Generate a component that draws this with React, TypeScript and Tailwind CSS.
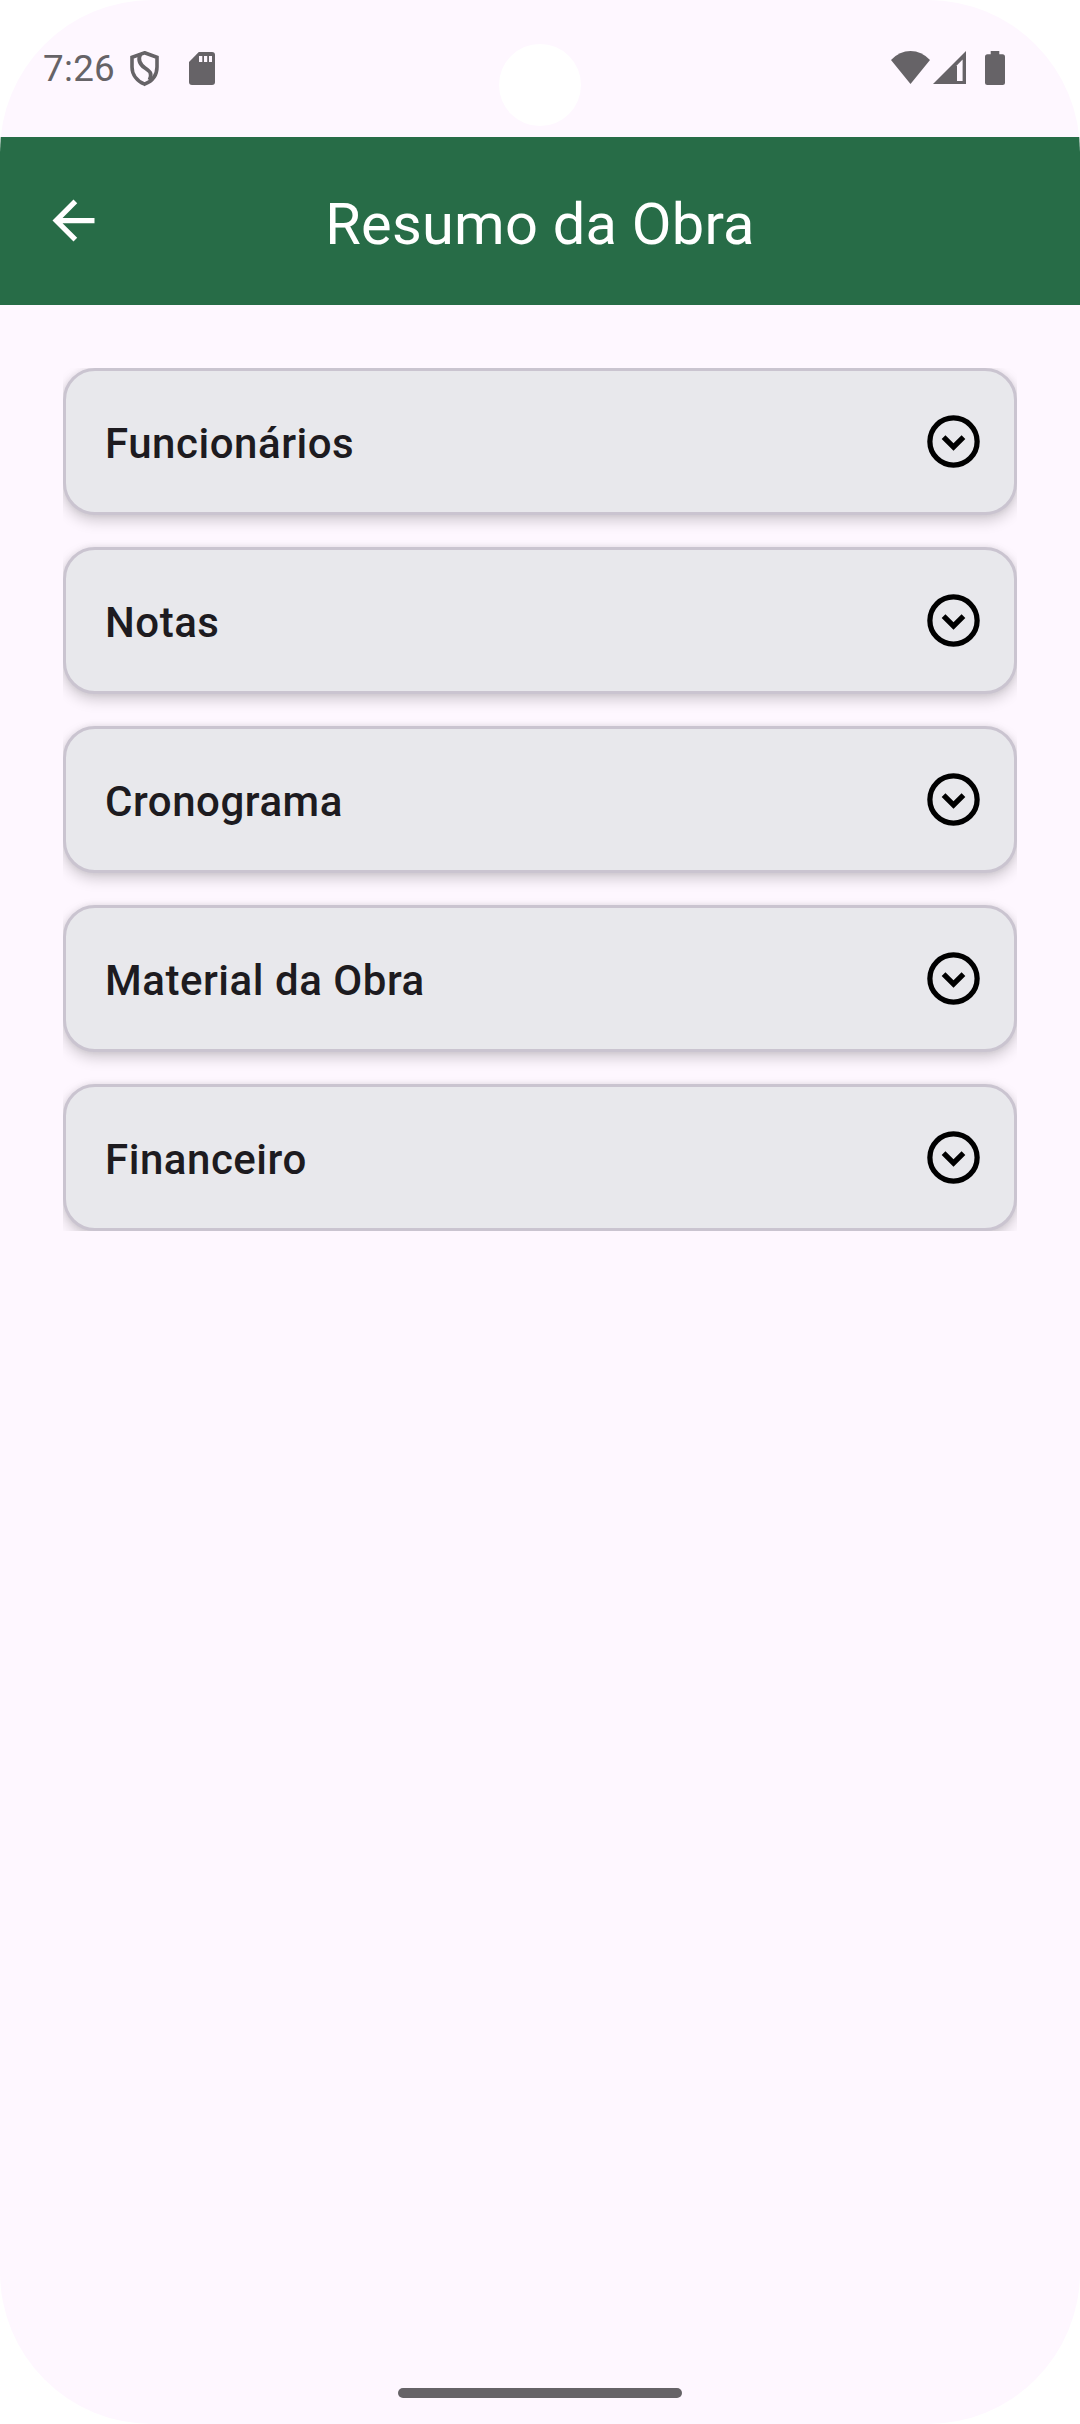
const SECTIONS = ["Funcionários", "Notas", "Cronograma", "Material da Obra", "Financeiro"];

function ShieldIcon() {
  return (
    <svg className="h-[36px] w-[30px]" viewBox="0 0 30 36" fill="none" stroke="#666367">
      <path d="M14.6 1.8 L27 6.3 V16 C27 23.5 22.5 30 14.6 33.2 C6.8 30 2 23.5 2 16 V6.3 Z" strokeWidth="3.6" />
      <path d="M10.5 3 C7.5 9 10 13.5 15 17 C20 20.5 22.5 22 19.5 29" strokeWidth="3.8" />
    </svg>
  );
}

function SdCardIcon() {
  return (
    <svg className="h-[33px] w-[26px]" viewBox="0 0 26 33">
      <path d="M9.8 0 H23 Q26 0 26 3 V30 Q26 33 23 33 H3 Q0 33 0 30 V10 Z" fill="#666367" />
      <path d="M10 4h3.3v6H10z M15 4h3.2v6H15z M20 4h3v6h-3z" fill="#fef7ff" />
    </svg>
  );
}

function WifiIcon() {
  return (
    <svg className="h-[33px] w-[39px]" viewBox="0 0 39 33">
      <path d="M0 9 Q8.5 0 19.5 0 Q30.5 0 39 9 L19.5 33 Z" fill="#666367" />
    </svg>
  );
}

function SignalIcon() {
  return (
    <svg className="h-[33px] w-[33px]" viewBox="0 0 33 33">
      <path d="M33 0 V33 H0 Z" fill="#666367" />
      <path d="M29.6 8.6 V30 H24 V14.2 Z" fill="#fef7ff" />
    </svg>
  );
}

function BatteryIcon() {
  return (
    <svg className="h-[34px] w-[20px]" viewBox="0 0 20 34">
      <path d="M5.7 0 H14.3 V3.3 H17.5 Q20 3.3 20 5.8 V31.5 Q20 34 17.5 34 H2.5 Q0 34 0 31.5 V5.8 Q0 3.3 2.5 3.3 H5.7 Z" fill="#666367" />
    </svg>
  );
}

function ArrowBackIcon() {
  return (
    <svg className="size-[63px]" viewBox="0 0 24 24" fill="#fff">
      <path d="M20 11H7.83l5.59-5.59L12 4l-8 8 8 8 1.41-1.41L7.83 13H20v-2z" />
    </svg>
  );
}

function ExpandIcon() {
  return (
    <svg className="size-[63px]" viewBox="0 0 24 24">
      <circle cx="12" cy="12" r="9" fill="none" stroke="#000" strokeWidth="2" />
      <path d="M12 15.5 16.5 11 15.075 9.6 12 12.675 8.925 9.6 7.5 11Z" />
    </svg>
  );
}

export default function App() {
  return (
    <div className="h-[2424px] w-[1080px] bg-white font-[Roboto,sans-serif]">
      <div className="relative flex h-full flex-col overflow-hidden rounded-[152px] bg-[#fef7ff]">
        <div className="flex h-[137px] shrink-0 items-start pr-[75px] pl-[43px]">
          <span className="mt-[47px] w-[87px] text-[36.75px] leading-[43px] tracking-[0.3px] text-[#666367]">7:26</span>
          <div className="mt-[51px] flex">
            <ShieldIcon />
            <div className="mt-px ml-[29px]">
              <SdCardIcon />
            </div>
          </div>
          <div className="mt-[51px] ml-auto flex">
            <WifiIcon />
            <div className="ml-[3px]">
              <SignalIcon />
            </div>
            <div className="ml-[19px]">
              <BatteryIcon />
            </div>
          </div>
        </div>
        <div className="absolute top-[44px] left-[499px] size-[82px] rounded-full bg-white" />

        <header className="grid h-[168px] shrink-0 grid-cols-[63px_1fr_63px] items-center bg-[#276c47] px-[42px]">
          <button aria-label="Voltar" className="-mt-px">
            <ArrowBackIcon />
          </button>
          <h1 className="pt-[7px] text-center text-[57.75px] leading-[73px] tracking-[0.25px] text-white">Resumo da Obra</h1>
        </header>

        <main className="mx-[63px] mt-[63px] flex flex-col gap-[32px] overflow-hidden">
          {SECTIONS.map((name) => (
            <button
              key={name}
              className="flex h-[147px] shrink-0 items-center justify-between rounded-[32px] border-[3px] border-[#cac4d0] bg-[#e8e8ec] pr-[29px] pl-[39px] shadow-[0_6px_14px_rgba(0,0,0,0.18),0_0_6px_rgba(0,0,0,0.08)]"
            >
              <span className="pt-[4px] text-[42px] leading-[63px] font-medium tracking-[0.53px] text-[#1d1b20]">{name}</span>
              <ExpandIcon />
            </button>
          ))}
        </main>

        <div className="mt-auto mb-[26px] h-[10px] w-[284px] self-center rounded-full bg-[#666367]" />
      </div>
    </div>
  );
}
